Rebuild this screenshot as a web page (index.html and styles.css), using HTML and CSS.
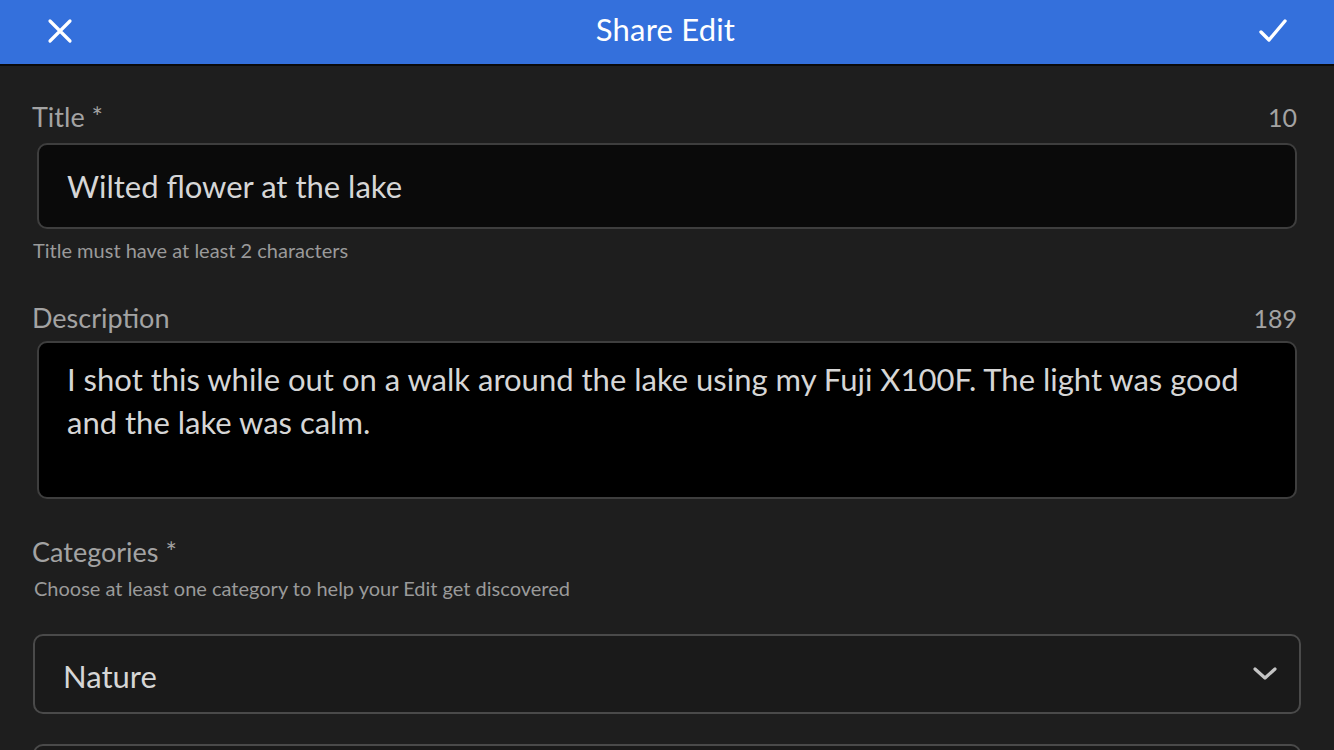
FILE: index.html
```html
<!DOCTYPE html>
<html>
<head>
<meta charset="utf-8">
<link rel="stylesheet" href="styles.css">
</head>
<body>
<header class="topbar">
  <button class="icon-btn" aria-label="Close">
    <svg width="26" height="26" viewBox="0 0 26 26"><path d="M3 3 L23 23 M23 3 L3 23" stroke="#fff" stroke-width="3.2" stroke-linecap="round"/></svg>
  </button>
  <h1 class="topbar-title">Share Edit</h1>
  <button class="icon-btn" aria-label="Done">
    <svg width="30" height="26" viewBox="0 0 30 26"><path d="M3 14 L11 22 L27 3" fill="none" stroke="#fff" stroke-width="3.4" stroke-linecap="round" stroke-linejoin="round"/></svg>
  </button>
</header>
<main class="form">
  <section class="field">
    <div class="field-head"><span class="label">Title *</span><span class="count">10</span></div>
    <div class="input">Wilted flower at the lake</div>
    <p class="hint">Title must have at least 2 characters</p>
  </section>
  <section class="field field-desc">
    <div class="field-head"><span class="label">Description</span><span class="count">189</span></div>
    <div class="textarea">I shot this while out on a walk around the lake using my Fuji X100F. The light was good and the lake was calm.</div>
  </section>
  <section class="field field-cat">
    <div class="label">Categories *</div>
    <p class="hint hint-cat">Choose at least one category to help your Edit get discovered</p>
    <div class="select">
      <span>Nature</span>
      <svg width="26" height="16" viewBox="0 0 26 16"><path d="M3 3 L13 12 L23 3" fill="none" stroke="#c4c4c4" stroke-width="3.2" stroke-linecap="round" stroke-linejoin="round"/></svg>
    </div>
    <div class="select select-next"></div>
  </section>
</main>
</body>
</html>
```
FILE: styles.css
```css
* { box-sizing: border-box; }
html, body { margin: 0; padding: 0; }
body {
  width: 1334px;
  height: 750px;
  overflow: hidden;
  background: #1e1e1e;
  font-family: "Lato", "Open Sans", sans-serif;
  color: #a3a3a3;
}
.topbar {
  height: 66px;
  background: #3470dc;
  border-bottom: 2px solid #0a0a0a;
  display: flex;
  align-items: center;
  justify-content: space-between;
  padding: 0 46px 4px 47px;
}
.topbar-title {
  margin: 0 0 2px;
  font-size: 31px;
  font-weight: 400;
  color: #fff;
  letter-spacing: 0.2px;
}
.icon-btn {
  background: none;
  border: 0;
  padding: 0;
  display: flex;
  align-items: center;
  margin-top: 2px;
}
.form { padding: 34px 33px 0 32px; }
.field-head {
  display: flex;
  justify-content: space-between;
  align-items: baseline;
  padding-right: 4px;
}
.label { font-size: 27px; color: #a3a3a3; line-height: 34px; }
.count { font-size: 25px; color: #a3a3a3; }
.input, .textarea {
  margin: 9px 4px 0 5px;
  background: #0a0a0a;
  border: 2px solid #3e3e3e;
  border-radius: 10px;
  color: #d6d6d6;
  font-size: 31px;
}
.input { height: 86px; display: flex; align-items: center; padding-left: 28px; }
.hint { margin: 8px 0 0 1px; font-size: 20px; color: #9a9a9a; line-height: 26px; }
.field-desc { margin-top: 38px; }
.textarea { background: #000; height: 158px; padding: 15px 28px 17px; line-height: 43px; margin-top: 6px; }
.field-cat { margin-top: 36px; }
.hint-cat { margin: 6px 0 0 2px; }
.select {
  margin: 33px 0 0 1px;
  height: 80px;
  background: #1a1a1a;
  border: 2px solid #4a4a4a;
  border-radius: 10px;
  display: flex;
  align-items: center;
  justify-content: space-between;
  padding: 3px 21px 0 28px;
  color: #d6d6d6;
  font-size: 31px;
}
.select svg { margin-top: -3px; }
.select-next { margin-top: 30px; }
```
